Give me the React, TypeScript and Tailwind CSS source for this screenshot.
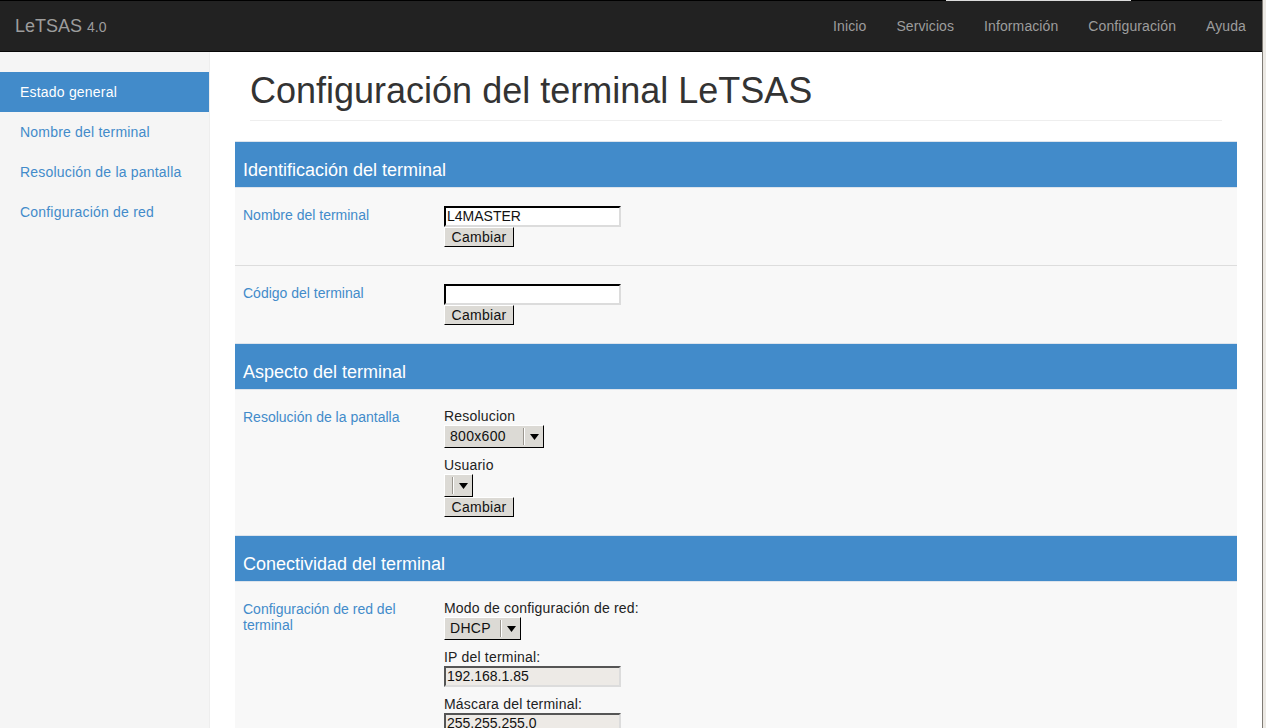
import React from "react";

const sans = "font-['Liberation_Sans',Arial,sans-serif]";

const navItems = ["Inicio", "Servicios", "Información", "Configuración", "Ayuda"];
const sideItems = ["Estado general", "Nombre del terminal", "Resolución de la pantalla", "Configuración de red"];

const TextInput = ({ value = "", disabled = false }: { value?: string; disabled?: boolean }) => (
  <div
    className={`w-[177px] h-[21px] border-2 border-b-[#dcdcdc] border-r-[#dcdcdc] pl-[1px] text-[14px] leading-[17px] text-[#111] ${
      disabled ? "bg-[#edeae6] border-t-[#555] border-l-[#555]" : "bg-white border-t-black border-l-black"
    }`}
  >
    {value}
  </div>
);

const Button = ({ label }: { label: string }) => (
  <div className="w-[70px] h-[20px] bg-[#dcdad5] border border-t-white border-l-white border-b-black border-r-black flex items-center justify-center text-[14px] text-[#111] tracking-[0.3px]">
    {label}
  </div>
);

const Select = ({ value, width }: { value: string; width: string }) => (
  <div
    className={`${width} h-[23px] bg-[#dcdad5] border border-t-white border-l-white border-b-black border-r-black flex items-center text-[14px] text-[#111] tracking-[0.3px]`}
  >
    <span className="flex-1 pl-[5px]">{value}</span>
    <span className="w-[2px] h-[17px] border-l border-l-[#9a968f] border-r border-r-white" />
    <span className="w-[18px] flex items-center justify-center">
      <svg width="9" height="6" viewBox="0 0 9 6">
        <path d="M0 0h9L4.5 6z" fill="#000" />
      </svg>
    </span>
  </div>
);

const Field = ({ label, children }: { label: string; children: React.ReactNode }) => (
  <div className="flex flex-col">
    <div className="text-[14px] leading-[17px] text-[#222] tracking-[0.2px]">{label}</div>
    {children}
  </div>
);

const SectionHeader = ({ title }: { title: string }) => (
  <div className="border-y border-[#dde4ec] bg-[#428bca] h-[47px] flex items-end pb-[3px] px-[8px] text-white text-[18px] leading-[28px]">
    {title}
  </div>
);

const Row = ({ label, children, divider = false }: { label: string; children: React.ReactNode; divider?: boolean }) => (
  <div className={`grid grid-cols-[209px_1fr] bg-[#f8f8f8] pt-[18px] pb-[18px] ${divider ? "border-b border-[#dddddd]" : ""}`}>
    <div className="pl-[8px] pr-[10px] text-[14px] leading-[16px] text-[#428bca] pt-[1px]">{label}</div>
    <div className="flex flex-col">{children}</div>
  </div>
);

export default function App() {
  return (
    <div className={`${sans} h-screen w-full overflow-hidden flex bg-white`}>
      <div className="flex-1 flex flex-col min-w-0">
        <div className="flex h-px">
          <div className="w-[946px] bg-black" />
          <div className="w-[185px] bg-[#dcdcdc]" />
          <div className="flex-1 bg-black" />
        </div>
        <header className="h-[51px] bg-[#222222] border-b border-[#080808] flex items-center justify-between">
          <div className="pl-[15px] text-[#9d9d9d] text-[18px]">
            LeTSAS <span className="text-[14px]">4.0</span>
          </div>
          <nav className="flex pr-[1px]">
            {navItems.map((n) => (
              <a key={n} className="px-[15px] text-[14px] text-[#9d9d9d] tracking-[0.1px]">
                {n}
              </a>
            ))}
          </nav>
        </header>
        <div className="flex flex-1 min-h-0">
          <aside className="w-[210px] bg-[#f5f5f5] border-r border-[#eeeeee] pt-[20px]">
            {sideItems.map((s, i) => (
              <div
                key={s}
                className={`h-[40px] pl-[20px] flex items-center text-[14px] tracking-[0.2px] ${
                  i === 0 ? "bg-[#428bca] text-white w-[209px]" : "text-[#428bca]"
                }`}
              >
                {s}
              </div>
            ))}
          </aside>
          <main className="flex-1 px-[25px] pt-[19px]">
            <div className="mx-[15px] border-b border-[#eeeeee] pb-[9px] mb-[20px]">
              <h1 className="text-[36px] leading-[40px] text-[#333333]">Configuración del terminal LeTSAS</h1>
            </div>

            <SectionHeader title="Identificación del terminal" />
            <Row label="Nombre del terminal" divider>
              <TextInput value="L4MASTER" />
              <Button label="Cambiar" />
            </Row>
            <Row label="Código del terminal">
              <TextInput />
              <Button label="Cambiar" />
            </Row>

            <SectionHeader title="Aspecto del terminal" />
            <Row label="Resolución de la pantalla">
              <Field label="Resolucion">
                <Select value="800x600" width="w-[100px]" />
              </Field>
              <div className="mt-[9px]">
                <Field label="Usuario">
                  <Select value="" width="w-[29px]" />
                </Field>
              </div>
              <Button label="Cambiar" />
            </Row>

            <SectionHeader title="Conectividad del terminal" />
            <Row label="Configuración de red del terminal">
              <Field label="Modo de configuración de red:">
                <Select value="DHCP" width="w-[77px]" />
              </Field>
              <div className="mt-[9px]">
                <Field label="IP del terminal:">
                  <TextInput value="192.168.1.85" disabled />
                </Field>
              </div>
              <div className="mt-[9px]">
                <Field label="Máscara del terminal:">
                  <TextInput value="255.255.255.0" disabled />
                </Field>
              </div>
            </Row>
          </main>
        </div>
      </div>
      <div className="w-[4px] border-l border-[#7f7b75] bg-[#ece9e4]" />
    </div>
  );
}
